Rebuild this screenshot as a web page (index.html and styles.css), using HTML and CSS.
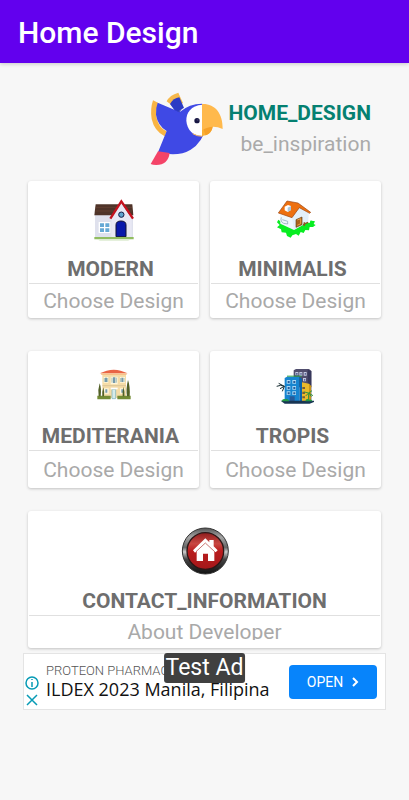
FILE: index.html
```html
<!DOCTYPE html>
<html lang="en">
<head>
<meta charset="utf-8">
<meta name="viewport" content="width=device-width, initial-scale=1">
<title>Home Design</title>
<link rel="stylesheet" href="styles.css">
</head>
<body>
<header class="app-bar"><h1>Home Design</h1></header>
<main>
  <section class="brand">
    <svg class="parrot" viewBox="30 15 225 225" aria-hidden="true">
      <path fill="#f6b84b" d="M83 46Q92 27 118 20Q124 34 132 51L108 65Z"/>
      <path fill="#2c3bc4" d="M93 54Q103 36 121 34L135 65L112 80Z"/>
      <path fill="#f9b443" d="M42 43L57 50Q47 92 58 111Q65 127 83 136L77 151Q46 135 38 99Q33 70 42 43Z"/>
      <path fill="#3f49e5" d="M56 50L122 78Q151 53 189 53Q219 72 203 119Q190 170 155 191Q118 214 57 199L83 135Q56 119 51 86Q50 65 56 50Z"/>
      <path fill="#2d39bd" d="M94 67Q122 83 132 64L121 79Z"/>
      <path fill="#fff" d="M190 56C156 58 141 81 142 104C144 132 163 150 190 150Z"/>
      <path fill="#fcb034" d="M189 150V118H222Q218 150 189 150Z"/>
      <path fill="#f6a129" d="M189 118H222Q219 142 200 148Z"/>
      <path fill="#ffb94c" d="M189 54C226 52 252 80 251 129Q218 114 189 133Z"/>
      <path fill="none" stroke="#f7b75b" stroke-width="3" d="M161 143Q174 151 190 151"/>
      <circle cx="174" cy="104" r="8" fill="#171642"/><circle cx="176" cy="102" r="3" fill="#34345e"/>
      <path fill="#f44468" d="M57 196L92 201Q87 237 52 237Q41 237 35 234Z"/>
    </svg>
    <div class="brand-text">
      <strong>HOME_DESIGN</strong>
      <span>be_inspiration</span>
    </div>
  </section>

  <section class="cards">
    <a class="card" href="#modern">
      <svg viewBox="-4 0 180 180" aria-hidden="true">
        <path fill="#dfe1ed" d="M29 74H143V143H29Z"/>
        <path fill="#4f3429" d="M31 43H141L144 76H27Z"/>
        <path stroke="#6b4535" stroke-width="2" d="M31 52H140M30 63H141"/>
        <path fill="#e8e8f4" d="M108 38L139 84V143H78V80Z"/>
        <path fill="none" stroke="#c4121e" stroke-width="7" d="M75 86L108 34L143 86"/>
        <path fill="#fff" d="M40 96H75V129H40Z"/>
        <path fill="#66a9d5" d="M44 100H56V111H44ZM60 100H72V111H60ZM44 115H56V126H44ZM60 115H72V126H60Z"/>
        <circle cx="108" cy="74" r="8" fill="#5fa4ce" stroke="#151b45" stroke-width="3"/>
        <path fill="#0818aa" stroke="#111236" stroke-width="3" d="M92 140V105Q92 93 107 93Q122 93 122 105V140Z"/>
        <path fill="#91bd60" d="M27 141H145V148H27Z"/><path fill="#dcebd0" d="M34 148H138L128 152H44Z"/>
      </svg>
      <h2>MODERN</h2>
      <p>Choose Design</p>
    </a>
    <a class="card" href="#minimalis">
      <svg viewBox="1 0 180 180" aria-hidden="true">
        <path fill="#08ed22" d="M38 89L48 97L52 82L132 99Q134 88 138 92L148 94L144 102L150 105L142 111L132 111L130 121L119 120L114 129L105 126L99 137L91 132L80 136L75 143L64 138L61 128L48 127L46 118L34 112L42 105L34 97Z"/>
        <path fill="#eff6fc" d="M43 74L75 80L98 49L129 69L128 96L85 120L44 101Z"/>
        <path fill="#d9e9f6" d="M78 76L98 50L129 69L127 96L85 120Z" opacity=".55"/>
        <path fill="#ed7010" stroke="#984615" stroke-width="2" d="M64 33L97 39L135 67L132 70L101 53L79 83L38 69Z"/>
        <path fill="#fff" d="M57 50L67 45L76 48V60L66 66L57 61Z"/><path fill="#abc8dd" d="M66 53L76 48V60L66 66Z"/>
        <path fill="none" stroke="#819baf" stroke-width="2" d="M47 82Q43 95 54 100L66 102V94L50 89"/>
        <path fill="#a9631c" stroke="#68421b" stroke-width="2" d="M91 89L109 81V104L91 112Z"/>
        <path fill="none" stroke="#ed9d42" stroke-width="3" d="M95 90L105 86V101L95 106"/>
        <path fill="none" stroke="#865a24" stroke-width="4" d="M112 104L127 97M116 97V108"/>
      </svg>
      <h2>MINIMALIS</h2>
      <p>Choose Design</p>
    </a>
    <a class="card card-compact" href="#mediterania">
      <svg viewBox="-4 0 180 180" aria-hidden="true">
        <path fill="#f5dca7" d="M51 42H122V114H51Z"/>
        <path fill="#e96545" d="M43 40L64 32Q86 26 106 32L127 40Z"/>
        <path fill="#f7b77d" d="M47 40H124V44H47Z"/>
        <path stroke="#cfbb90" stroke-width="2" d="M51 77H122"/>
        <path fill="#fff6dc" d="M55 51H69V68H55ZM76 50H97V73H76ZM104 51H119V68H104ZM56 85H70V101H56ZM104 85H119V101H104Z"/>
        <path fill="#759aac" d="M59 53H65V66H59ZM83 52H90V69H83ZM108 53H114V66H108ZM60 88H66V98H60ZM108 88H114V98H108Z"/>
        <path stroke="#a8c1bd" stroke-width="3" d="M57 54V66M67 54V66M80 53V68M93 53V68M106 54V66M116 54V66"/>
        <path fill="#d6ebe9" stroke="#73adb7" stroke-width="2" d="M80 116V88H91V116Z"/><path fill="#fff" d="M76 83H97V88H76Z"/>
        <path fill="#738b34" d="M36 107H76V118H36ZM96 107H136V118H96Z"/>
        <path fill="#526026" d="M43 70Q49 85 46 109H40Q37 88 43 70ZM54 82Q58 96 56 109H51Q50 94 54 82ZM128 60Q135 79 133 109H125Q121 87 128 60ZM115 80Q119 97 117 109H112Q111 94 115 80Z"/>
      </svg>
      <h2>MEDITERANIA</h2>
      <p>Choose Design</p>
    </a>
    <a class="card card-compact" href="#tropis">
      <svg viewBox="1 0 180 180" aria-hidden="true">
        <path fill="#514e6e" d="M84 31L91 27H130L137 33V82H84Z"/><path fill="#37385b" d="M126 29L137 33V122H126Z"/>
        <path fill="#c3c8df" d="M89 36H98V46H89ZM101 36H110V47H101ZM114 36H123V47H114ZM112 54H121V64H112Z"/>
        <path fill="#5a6796" d="M91 39H96V44H91ZM104 39H108V44H104ZM117 39H121V44H117ZM115 57H119V62H115Z"/>
        <path fill="#eab92b" d="M105 66L130 71L136 79V123H105Z"/><path fill="#c8941a" d="M130 71L136 79V123H130Z"/>
        <path fill="#765f39" d="M110 81H118V87H110ZM110 95H118V102H110ZM110 109H118V115H110Z"/>
        <path fill="#1785d0" d="M57 54L64 50H101V124H57Z"/><path fill="#0b64ac" d="M101 50L109 57V124H101Z"/>
        <path fill="#2c9f4a" d="M64 47H108V50H64Z"/>
        <path fill="#abd8f4" d="M63 60H74V71H63ZM80 60H91V71H80ZM63 78H74V89H63ZM80 78H91V89H80ZM63 94H74V105H63ZM80 94H91V105H80Z"/>
        <path fill="#275b99" d="M66 63H72V69H66ZM83 63H89V69H83ZM66 81H72V87H66ZM83 81H89V87H83ZM66 97H72V103H66ZM83 97H89V103H83ZM72 109H87V124H72Z"/>
        <path fill="none" stroke="#172d32" stroke-width="3" d="M33 79L45 76L56 79M39 70L56 79M56 79L43 86M56 79L50 94"/>
        <path fill="none" stroke="#3a943b" stroke-width="3" d="M128 123L129 99M116 96L129 99L139 92M120 108L129 99L142 107M130 99L137 110"/>
        <path fill="#183554" d="M45 122H145V126L132 131H57Z"/>
        <path fill="#249a43" d="M48 124Q51 115 59 118Q67 115 71 124ZM119 124Q121 114 130 119Q139 116 140 124Z"/>
      </svg>
      <h2>TROPIS</h2>
      <p>Choose Design</p>
    </a>
    <a class="card card-wide" href="#contact">
      <svg viewBox="13 0 180 180" aria-hidden="true">
        <defs>
          <linearGradient id="ring" x2="0" y2="1"><stop stop-color="#555"/><stop offset=".2" stop-color="#a5a5a5"/><stop offset=".42" stop-color="#666"/><stop offset=".52" stop-color="#ccc"/><stop offset=".68" stop-color="#444"/><stop offset="1" stop-color="#111"/></linearGradient>
          <linearGradient id="button" x2="0" y2="1"><stop stop-color="#8e1c1c"/><stop offset=".3" stop-color="#c94742"/><stop offset=".5" stop-color="#b91c1d"/><stop offset="1" stop-color="#a5181b"/></linearGradient>
        </defs>
        <circle cx="104" cy="93" r="69" fill="url(#ring)" stroke="#333" stroke-width="3"/>
        <circle cx="104" cy="93" r="55" fill="url(#button)" stroke="#2d1717" stroke-width="4"/>
        <path fill="#fff" d="M104 55L116 67V60H129V79L141 91L135 97L131 94V123H112V101H97V123H78V94L73 98L67 91Z"/>
        <path fill="none" stroke="#ad302c" stroke-width="2" d="M76 95L104 69L132 95"/>
      </svg>
      <h2>CONTACT_INFORMATION</h2>
      <p>About Developer</p>
    </a>
  </section>

  <aside class="ad">
    <span class="ad-label">Test Ad</span>
    <div class="ad-tools">
      <button aria-label="Ad information"><svg viewBox="0 0 14 14"><circle cx="7" cy="7" r="6"/><path d="M7 6V11M7 3V4"/></svg></button>
      <button aria-label="Close ad"><svg viewBox="0 0 14 14"><path d="M2 2L12 12M12 2L2 12"/></svg></button>
    </div>
    <div class="ad-copy"><span>PROTEON PHARMACI</span><strong>ILDEX 2023 Manila, Filipina</strong></div>
    <button class="open">OPEN <svg viewBox="0 0 8 12" aria-hidden="true"><path d="M2 2L6 6L2 10"/></svg></button>
  </aside>
</main>
</body>
</html>
```
FILE: styles.css
```css
* { box-sizing: border-box; }
body { margin: 0; min-height: 100vh; background: #f7f7f7; font-family: Roboto, sans-serif; }
h1, h2, p { margin: 0; }
button { border: 0; padding: 0; background: none; font: inherit; }

.app-bar {
  padding: 17px 18px 14px;
  background: #6200ee;
  color: #fff;
  box-shadow: 0 1px 4px rgba(0, 0, 0, .2);
}
.app-bar h1 { font-size: 30px; line-height: 32px; font-weight: 500; }

.brand {
  display: flex;
  justify-content: flex-end;
  align-items: center;
  gap: 4px;
  padding: 28px 38px 15px 28px;
}
.parrot { width: 75px; height: 75px; }
.brand-text { display: flex; flex-direction: column; align-items: flex-end; gap: 7px; font-size: 21px; line-height: 24px; }
.brand-text strong { color: #058071; font-weight: 700; }
.brand-text span { color: #aaa; }

.cards {
  display: grid;
  grid-template-columns: 1fr 1fr;
  column-gap: 11px;
  row-gap: 33px;
  padding: 0 28px;
}
.card {
  display: flex;
  flex-direction: column;
  align-items: center;
  min-height: 137px;
  padding: 9px 1px 0;
  border-radius: 3px;
  background: #fff;
  box-shadow: 0 1px 3px rgba(0, 0, 0, .22);
  text-decoration: none;
  font-size: 21px;
  line-height: 24px;
}
.card svg { width: 60px; height: 60px; }
.card h2 {
  align-self: stretch;
  margin-top: 7px;
  padding: 0 6px 2px 0;
  border-bottom: 1px solid #e0e0e0;
  color: #6e6e6e;
  font-size: 21px;
  font-weight: 700;
  text-align: center;
}
.card p { margin: auto 0; color: #a9a9a9; }
.card-compact h2 { margin-top: 4px; }
.card-wide { grid-column: 1 / -1; margin-top: -10px; }
.card-wide h2 { margin-top: 9px; padding-right: 0; }
.card-wide p { height: 20px; margin: 4px 0 0; overflow: hidden; }

.ad {
  position: relative;
  display: flex;
  align-items: center;
  min-height: 57px;
  margin: 5px 23px 0;
  padding-right: 8px;
  border: 1px solid #e4e4e4;
  background: #fff;
}
.ad-tools { display: flex; flex-direction: column; gap: 3px; width: 22px; padding: 20px 0 0 1px; }
.ad-tools button { height: 14px; }
.ad-tools svg { display: block; width: 14px; height: 14px; fill: none; stroke: #079bb5; stroke-width: 1.5; }
.ad-copy { flex: 1; display: flex; flex-direction: column; white-space: nowrap; }
.ad-copy span { color: #555; font-size: 13px; line-height: 15px; font-weight: 300; }
.ad-copy strong { color: #111; font-family: "Open Sans", Roboto, sans-serif; font-size: 18px; line-height: 22px; font-weight: 400; }
.ad-label {
  position: absolute;
  top: -1px;
  left: 50%;
  transform: translateX(-50%);
  padding: 2px;
  border-radius: 3px;
  background: #404040;
  color: #fff;
  font-size: 23px;
  line-height: 26px;
  white-space: nowrap;
}
.open {
  display: flex;
  align-items: center;
  justify-content: center;
  gap: 8px;
  width: 88px;
  height: 34px;
  border-radius: 4px;
  background: #0784fb;
  color: #fff;
  font-size: 14px;
}
.open svg { width: 8px; height: 12px; fill: none; stroke: #fff; stroke-width: 2; }
```
